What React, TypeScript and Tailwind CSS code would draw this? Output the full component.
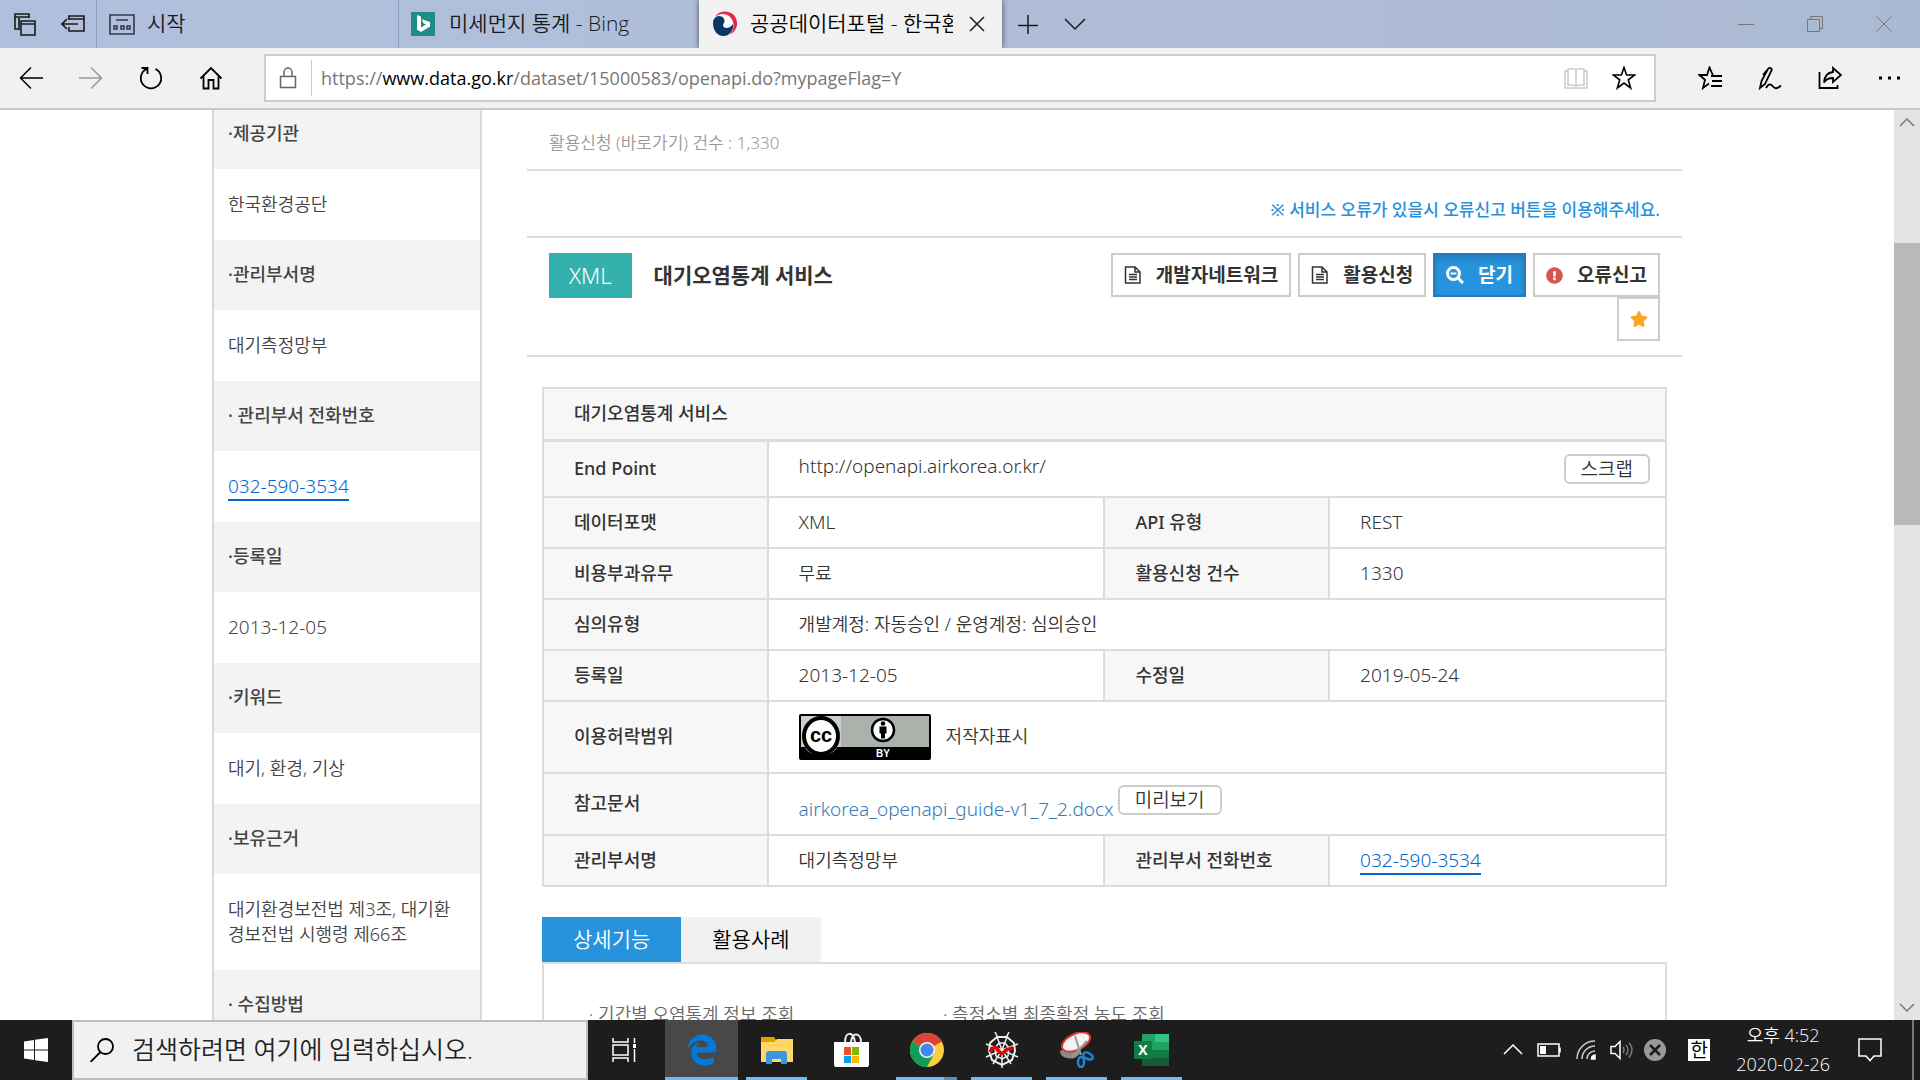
import type { ReactNode } from "react";
import { FaExclamationCircle, FaStar } from "react-icons/fa";
import { FaEdgeLegacy } from "react-icons/fa6";

type IconProps = {
  className?: string;
  children: ReactNode;
  size?: number;
  stroke?: number;
};

const Icon = ({ className = "", children, size = 24, stroke = 1.5 }: IconProps) => (
  <svg
    width={size}
    height={size}
    viewBox={`0 0 ${size} ${size}`}
    fill="none"
    stroke="currentColor"
    strokeWidth={stroke}
    className={`shrink-0 ${className}`}
    aria-hidden="true"
  >
    {children}
  </svg>
);

const sidebarItems = [
  { label: "·제공기관", value: "한국환경공단" },
  { label: "·관리부서명", value: "대기측정망부" },
  { label: "· 관리부서 전화번호", value: "032-590-3534", tel: true },
  { label: "·등록일", value: "2013-12-05", latin: true },
  { label: "·키워드", value: "대기, 환경, 기상" },
  { label: "·보유근거", value: "대기환경보전법 제3조, 대기환경보전법 시행령 제66조" },
  { label: "· 수집방법", value: "" },
];

function TabBar() {
  return (
    <header className="flex h-12 shrink-0 bg-linear-to-r from-[#afc0de] via-[#b0bdd8] to-[#abbad3] text-[21px] font-[350] text-[#1a1a1a]">
      <div className="flex w-[97px] items-center gap-6 border-r border-[#8f9fbd] pl-[13px]">
        <button aria-label="탭 미리 보기">
          <Icon stroke={1.6}>
            <path d="M6 17H2V2h14v4M2 5h14M6 18V6" />
            <path d="M8 9h14v14H8zM8 12h14" />
          </Icon>
        </button>
        <button aria-label="탭 보관">
          <Icon stroke={1.6}>
            <path d="M8 8V4h15v15H8v-4M8 7h15M1 12h16M6 7l-5 5 5 5" />
          </Icon>
        </button>
      </div>
      <button className="flex w-[302px] items-center gap-3 border-r border-[#8f9fbd] pl-3">
        <Icon size={26} stroke={2} className="text-[#333845]">
          <path d="M1 4h24v19H1zM7 9h12M5 15h3v3H5zM12 15h3v3h-3zM18 15h3v3h-3z" strokeWidth="1.6" />
        </Icon>
        시작
      </button>
      <button className="flex w-[300px] items-center gap-3.5 pl-3">
        <svg width="24" height="24" viewBox="0 0 24 24" aria-hidden="true">
          <rect width="24" height="24" fill="#1f8c88" />
          <path d="M6 3l4 1.5v11l5-3-2.600-1.200-1.600-4L19 10v4.500L10 20l-4-2.200z" fill="#fff" />
        </svg>
        미세먼지 통계 - Bing
      </button>
      <div className="flex w-[303px] items-center bg-[#f1f1f1] pl-[13px] shadow-[0_0_6px_rgba(0,0,0,0.6)]">
        <svg width="26" height="26" viewBox="0 0 26 26" className="shrink-0" aria-hidden="true">
          <circle cx="12.500" cy="13" r="11" fill="#fff" />
          <path d="M3 6C7-1 17-1 22 4c5 6 4 15-4 20 4-5 5-12 1-17C15 2 8 2 3 6z" fill="#e8284a" />
          <path d="M1 12c0-4 3-7 6-7 4 0 6 3 5.500 6-.5 1-1.500 2-1.500 3 0 4 7 4 10-1 1 6-3 12-9.500 12S1 19 1 12z" fill="#0b3766" />
        </svg>
        <span className="ml-3 w-[203px] overflow-hidden whitespace-nowrap text-black">공공데이터포털 - 한국환경공단</span>
        <button aria-label="탭 닫기" className="ml-4">
          <Icon size={16}>
            <path d="M1 1l14 14M15 1L1 15" />
          </Icon>
        </button>
      </div>
      <button aria-label="새 탭" className="ml-4">
        <Icon size={20}>
          <path d="M0 11.500h20M10 1v20" />
        </Icon>
      </button>
      <button aria-label="탭 목록" className="ml-[26px]">
        <Icon size={22}>
          <path d="M1 6l10 10L21 6" />
        </Icon>
      </button>
      <div className="ml-auto flex items-center gap-[53px] pr-7 text-[#777]">
        <button aria-label="최소화">
          <Icon size={16} stroke={1}>
            <path d="M0 8.500h16" />
          </Icon>
        </button>
        <button aria-label="이전 크기로">
          <Icon size={16} stroke={1}>
            <path d="M.5 3.500h12v12H.5zM3.500 3V.5h12v12H13" />
          </Icon>
        </button>
        <button aria-label="닫기">
          <Icon size={16} stroke={1}>
            <path d="M.5.5l15 15M15.500.5l-15 15" />
          </Icon>
        </button>
      </div>
    </header>
  );
}

function AddressBar() {
  return (
    <nav className="flex h-[62px] shrink-0 items-center border-b-2 border-[#c9c9c9] bg-[#f1f1f1] pl-[19px] text-black">
      <div className="flex w-[245px] items-center gap-9">
        <button aria-label="뒤로">
          <Icon>
            <path d="M12 1.500L1.500 12 12 22.500M1.500 12H24" />
          </Icon>
        </button>
        <button aria-label="앞으로" className="text-[#999]">
          <Icon>
            <path d="M12 1.500L22.500 12 12 22.500M22.500 12H0" />
          </Icon>
        </button>
        <button aria-label="새로 고침">
          <Icon stroke={1.8}>
            <path d="M7.500 3A10.200 10.200 0 1 0 16.500 3M8.500 8V2H2.500" />
          </Icon>
        </button>
        <button aria-label="홈">
          <Icon stroke={1.800}>
            <path d="M1.500 12.500L12 2l10.500 10.500M4.500 10v12.500h5V14h5v8.500h5V10" />
          </Icon>
        </button>
      </div>
      <div className="flex h-12 flex-1 items-center border-2 border-[#ccc] bg-white pr-[18px] pl-2.5">
        <Icon className="text-[#666]">
          <path d="M4.500 10.500h15v11h-15zM8 10V6a4 4 0 0 1 8 0v4" />
        </Icon>
        <a href="#" className="ml-[11px] flex-1 border-l border-[#ccc] pl-[9px] text-[18px] leading-9 text-[#767676]">
          https://<span className="text-black">www.data.go.kr</span>/dataset/15000583/openapi.do?mypageFlag=Y
        </a>
        <div className="flex gap-6">
          <button aria-label="읽기용 보기" className="text-[#ccc]">
            <Icon>
              <path d="M12 4c-2-2-5-1-8-1v16c3 0 6-.5 8 1 2-1.500 5-1 8-1V3c-3 0-6-1-8 1zM12 4v16M4 5H1v17h22V5h-3" />
            </Icon>
          </button>
          <button aria-label="즐겨찾기 추가">
            <Icon stroke={1.600}>
              <path d="M12 1.500l2.600 7.500h8l-6.300 4.800 2.300 8.200-6.600-5-6.600 5 2.300-8.200L1.400 9h8z" />
            </Icon>
          </button>
        </div>
      </div>
      <div className="ml-[42px] flex gap-9 pr-[18px]">
        <button aria-label="즐겨찾기">
          <Icon stroke={1.800}>
            <path d="M15 9.500L11.500 1.500 9 9H1.500l5.500 4.800L5 22l6-4.500M13 10h11M14 15h10M13 20h11" />
          </Icon>
        </button>
        <button aria-label="메모 추가">
          <Icon stroke={1.800}>
            <path d="M2 22l1.500-7L10 3c1-2 4.500-1 3.500 1.500L7 18l-5 4zM9 4L5 9M8 22c3-5 5-4 7-1.500s4 2.500 8-1" />
          </Icon>
        </button>
        <button aria-label="공유">
          <Icon stroke={1.800}>
            <path d="M1.500 6v16h18v-3M15 2l8 7-8 7v-4c-4 0-7 1-9 4.500C6.500 10 10 6.500 15 6z" />
          </Icon>
        </button>
        <button aria-label="설정 및 기타">
          <Icon>
            <path d="M1 12h3M10 12h3M19 12h3" strokeWidth="3" />
          </Icon>
        </button>
      </div>
    </nav>
  );
}

function Sidebar() {
  return (
    <aside className="w-[270px] shrink-0 border-x-2 border-[#d9d9d9] text-[18px] leading-[25px] text-[#444]">
      <dl className="-mt-[11px]">
        {sidebarItems.map((item) => (
          <div key={item.label}>
            <dt className="bg-[#f3f3f3] px-3.5 pt-[22px] pb-[23px] font-medium">{item.label}</dt>
            <dd className={`px-3.5 py-[23px] font-[350] break-all ${item.latin || item.tel ? "text-[19px]" : ""}`}>
              {item.tel ? (
                <a href="tel:032-590-3534" className="border-b-2 border-[#0066d0] text-[#0066d0]">
                  {item.value}
                </a>
              ) : (
                item.value
              )}
            </dd>
          </div>
        ))}
      </dl>
    </aside>
  );
}

const DocIcon = () => (
  <Icon size={18} stroke={1.500}>
    <path d="M1.500 1h9.500l5 5v11h-14.500zM11 1v5h5M5 8.500h8M5 11h8M5 13.500h8" />
  </Icon>
);

type ActionProps = { icon: ReactNode; label: string; active?: boolean };

const Action = ({ icon, label, active }: ActionProps) => (
  <button
    className={`flex h-11 items-center gap-3.5 border-2 px-[11px] text-[19px] font-bold ${
      active
        ? "border-[#2b78b8] bg-[#2793dd] text-white shadow-[inset_0_4px_6px_rgba(0,0,0,0.15)]"
        : "border-[#ccc] bg-white text-[#333]"
    }`}
  >
    {icon}
    {label}
  </button>
);

type CellProps = { children: ReactNode; span?: number; latin?: boolean };

const Th = ({ children }: CellProps) => (
  <th scope="row" className="border-2 border-[#ddd] bg-[#f7f7f7] px-[30px] py-3 text-left font-medium">
    {children}
  </th>
);

const Td = ({ children, span, latin }: CellProps) => (
  <td colSpan={span} className={`border-2 border-[#ddd] px-[30px] font-[350] ${latin ? "text-[19px]" : ""}`}>
    {children}
  </td>
);

const SmallButton = ({ children }: { children: ReactNode }) => (
  <button className="h-[30px] rounded-md border-2 border-[#ccc] bg-white px-[15px] text-[19px] leading-6 font-[350] text-[#333]">
    {children}
  </button>
);

const CcBadge = () => (
  <svg width="132" height="46" viewBox="0 0 132 46" role="img" aria-label="CC BY">
    <rect width="132" height="46" rx="2" fill="#000" />
    <rect x="2" y="2" width="128" height="31" fill="#aab2ab" />
    <path d="M2 2h40v31H38C34 44 10 44 6 33H2z" fill="#c9cfc9" />
    <ellipse cx="22" cy="22" rx="17" ry="18" fill="#fff" stroke="#000" strokeWidth="4" />
    <text x="22" y="28" textAnchor="middle" fontSize="20" fontWeight="900" fontFamily="Liberation Sans, sans-serif" fill="#000">
      cc
    </text>
    <circle cx="84" cy="16" r="11" fill="#fff" stroke="#000" strokeWidth="2.500" />
    <circle cx="84" cy="9.500" r="2.300" fill="#000" />
    <path d="M80.500 12.500h7v7h-1.500v5h-4v-5h-1.500z" fill="#000" />
    <text x="84" y="43" textAnchor="middle" fontSize="10" fontWeight="700" fontFamily="Liberation Sans, sans-serif" fill="#fff">
      BY
    </text>
  </svg>
);

function InfoTable() {
  return (
    <table className="w-full table-fixed border-collapse text-[18px] leading-[25px] text-[#333]">
      <colgroup>
        <col className="w-[20%]" />
        <col className="w-[30%]" />
        <col className="w-[20%]" />
        <col className="w-[30%]" />
      </colgroup>
      <thead>
        <tr className="h-[52px]">
          <th colSpan={4} className="border-2 border-b-3 border-[#ddd] bg-[#f7f7f7] px-[30px] text-left font-medium">
            대기오염통계 서비스
          </th>
        </tr>
      </thead>
      <tbody>
        <tr>
          <Th>End Point</Th>
          <td colSpan={3} className="border-2 border-[#ddd] py-3 pr-[15px] pl-[30px] text-[19px] font-[350]">
            <div className="flex justify-between">
              http://openapi.airkorea.or.kr/
              <SmallButton>스크랩</SmallButton>
            </div>
          </td>
        </tr>
        <tr>
          <Th>데이터포맷</Th>
          <Td latin>XML</Td>
          <Th>API 유형</Th>
          <Td latin>REST</Td>
        </tr>
        <tr>
          <Th>비용부과유무</Th>
          <Td>무료</Td>
          <Th>활용신청 건수</Th>
          <Td latin>1330</Td>
        </tr>
        <tr>
          <Th>심의유형</Th>
          <Td span={3}>개발계정: 자동승인 / 운영계정: 심의승인</Td>
        </tr>
        <tr>
          <Th>등록일</Th>
          <Td latin>2013-12-05</Td>
          <Th>수정일</Th>
          <Td latin>2019-05-24</Td>
        </tr>
        <tr className="h-[72px]">
          <Th>이용허락범위</Th>
          <Td span={3}>
            <div className="flex items-center gap-[15px]">
              <CcBadge />
              저작자표시
            </div>
          </Td>
        </tr>
        <tr className="h-[62px]">
          <Th>참고문서</Th>
          <Td span={3} latin>
            <div className="flex gap-1">
              <a href="#" className="pt-3 text-[#337ab7]">
                airkorea_openapi_guide-v1_7_2.docx
              </a>
              <SmallButton>미리보기</SmallButton>
            </div>
          </Td>
        </tr>
        <tr>
          <Th>관리부서명</Th>
          <Td>대기측정망부</Td>
          <Th>관리부서 전화번호</Th>
          <Td latin>
            <a href="tel:032-590-3534" className="border-b-2 border-[#0066d0] text-[#0066d0]">
              032-590-3534
            </a>
          </Td>
        </tr>
      </tbody>
    </table>
  );
}

function Detail() {
  return (
    <main className="min-w-0 flex-1 text-[#333]">
      <p className="border-b-2 border-[#ddd] pt-5 pb-[13px] pl-[22px] text-[17px] leading-[26px] font-[350] text-[#999]">
        활용신청 (바로가기) 건수 : 1,330
      </p>
      <p className="border-b-2 border-[#ddd] pt-[26px] pr-[22px] pb-[13px] text-right text-[17px] leading-[26px] font-medium text-[#2791dc]">
        ※ 서비스 오류가 있을시 오류신고 버튼을 이용해주세요.
      </p>
      <section className="flex items-start border-b-2 border-[#ddd] px-[22px] pt-[15px] pb-3.5">
        <span className="bg-[#34b1ad] px-5 text-[22px] leading-[45px] font-light text-white">XML</span>
        <h2 className="ml-[22px] text-[21px] leading-[44px] font-bold">대기오염통계 서비스</h2>
        <div className="ml-auto flex flex-col items-end">
          <div className="flex gap-[7px]">
            <Action icon={<DocIcon />} label="개발자네트워크" />
            <Action icon={<DocIcon />} label="활용신청" />
            <Action
              active
              label="닫기"
              icon={
                <Icon size={18} stroke={3}>
                  <circle cx="7.500" cy="7.500" r="6" />
                  <path d="M12 12l5 5" />
                  <path d="M4.500 7.500h6" strokeWidth="2" />
                </Icon>
              }
            />
            <Action icon={<FaExclamationCircle className="size-[17px] text-[#d9534f]" />} label="오류신고" />
          </div>
          <button aria-label="즐겨찾기" className="flex h-11 w-[43px] items-center justify-center border-2 border-[#ccc]">
            <FaStar className="size-[18px] text-[#f9a526]" />
          </button>
        </div>
      </section>
      <div className="px-[15px] pt-[30px]">
        <InfoTable />
        <div className="mt-[30px] flex text-[21px] leading-[45px] font-[350]">
          <button className="bg-[#2793dd] px-[31px] text-white">상세기능</button>
          <button className="bg-[#f1f1f1] px-[31px] text-black">활용사례</button>
        </div>
        <ul className="flex border-2 border-[#ddd] px-[45px] pt-[37px] pb-10 text-[18px] leading-[26px] font-[350] text-[#666]">
          <li className="w-[354px]">· 기간별 오염통계 정보 조회</li>
          <li>· 측정소별 최종확정 농도 조회</li>
        </ul>
      </div>
    </main>
  );
}

function Scrollbar() {
  return (
    <div className="flex w-[26px] shrink-0 flex-col items-center justify-between bg-[#e4e4e4] text-[#777]">
      <Icon size={16} className="mt-1">
        <path d="M1 12l7-7 7 7" />
      </Icon>
      <div className="mt-[113px] mb-auto h-[282px] w-full bg-[#b9b9b9]" />
      <Icon size={16} className="mb-1">
        <path d="M1 4l7 7 7-7" />
      </Icon>
    </div>
  );
}

const apps = [
  {
    name: "Microsoft Edge",
    cell: "bg-[#484848]",
    bar: "w-full bg-[#76b9ed]",
    icon: <FaEdgeLegacy className="size-8 text-[#0478d7]" />,
  },
  {
    name: "파일 탐색기",
    cell: "",
    bar: "w-[61px] bg-[#76b9ed]",
    icon: (
      <svg width="32" height="32" viewBox="0 0 32 32">
        <path d="M0 3h13l2 3v4H0z" fill="#e0a000" />
        <path d="M0 8h13l3-3h16v23H0z" fill="#ffd766" />
        <path d="M5 30V20q0-3 3-3h15q3 0 3 3v10h-6v-5h-9v5z" fill="#3a96dd" />
      </svg>
    ),
  },
  {
    name: "Microsoft Store",
    cell: "",
    bar: "w-0",
    icon: (
      <svg width="36" height="36" viewBox="0 0 36 36">
        <path d="M11 11C11-1 19-1 21 10M17 10C18-1 27 1 27 10" fill="none" stroke="#eee" strokeWidth="2" />
        <path d="M0 10h35v23l-1 2H1l-1-2z" fill="#fff" />
        <path d="M10 15h7v8h-7z" fill="#f25022" />
        <path d="M18 15h7v8h-7z" fill="#7fba00" />
        <path d="M10 24h7v7h-7z" fill="#00a4ef" />
        <path d="M18 24h7v7h-7z" fill="#ffb900" />
      </svg>
    ),
  },
  {
    name: "Chrome",
    cell: "",
    bar: "w-[61px] bg-linear-to-r from-[#76b9ed] from-78% to-[#5b8fb8] to-78%",
    icon: (
      <svg width="34" height="34" viewBox="0 0 34 34">
        <circle cx="17" cy="17" r="17" fill="#ffcd40" />
        <path d="M17 17L2.300 8.500A17 17 0 0 1 31.700 8.500z" fill="#db4437" />
        <path d="M31.700 8.500H17v8z" fill="#db4437" />
        <path d="M2.300 8.500A17 17 0 0 0 17 34l7-13-7-4z" fill="#0f9d58" />
        <circle cx="17" cy="17" r="8" fill="#f1f1f1" />
        <circle cx="17" cy="17" r="6.500" fill="#4285f4" />
      </svg>
    ),
  },
  {
    name: "Spyder",
    cell: "",
    bar: "w-[61px] bg-[#76b9ed]",
    icon: (
      <svg width="34" height="36" viewBox="0 0 34 36" fill="none" stroke="#eee" strokeWidth="1.500">
        <path d="M10 0l3 6M24 0l-3 6M17 18L12 5M17 18l5-13M17 18L1 12M17 18l16-6M17 18L1 25M17 18l16 7M17 18v18M17 18L8 32M17 18l9 14" />
        <path d="M12 5h10l7 6 1 8-3 9-10 5-10-5-3-9 1-8z" strokeWidth="2" />
        <path d="M14 11h6l4 5-1 8-6 3-6-3-1-8z" />
        <path d="M5 20c3-6 6-5 8-2s4 5 7 1 5 0 8-4" stroke="#e80000" strokeWidth="3.500" />
      </svg>
    ),
  },
  {
    name: "캡처 도구",
    cell: "",
    bar: "w-[61px] bg-[#76b9ed]",
    icon: (
      <svg width="36" height="36" viewBox="0 0 36 36" fill="none">
        <path d="M1 19c0 5 6 9 15 7l6-5-13-5z" fill="#8b8b8b" />
        <ellipse cx="17" cy="10" rx="15" ry="8" transform="rotate(-25 17 10)" fill="#f5f5f5" stroke="#e03a3a" strokeWidth="2" />
        <path d="M16 4l6 19M28 9L13 25" stroke="#999" strokeWidth="2" />
        <ellipse cx="29" cy="24" rx="5" ry="3" transform="rotate(25 29 24)" stroke="#1c86cf" strokeWidth="2.500" />
        <ellipse cx="22" cy="30" rx="3" ry="5" stroke="#1c86cf" strokeWidth="2.500" />
      </svg>
    ),
  },
  {
    name: "Excel",
    cell: "",
    bar: "w-[61px] bg-[#76b9ed]",
    icon: (
      <svg width="35" height="32" viewBox="0 0 35 32">
        <path d="M8 0h27v32H8z" fill="#21a366" />
        <path d="M21 0h14v8H21z" fill="#33c481" />
        <path d="M8 16h13v8H8zM21 16h14v8H21z" fill="#107c41" />
        <path d="M8 24h27v8H8z" fill="#185c37" />
        <rect y="7" width="18" height="18" rx="1" fill="#107c41" />
        <text x="9" y="21" textAnchor="middle" fontSize="14" fontWeight="700" fontFamily="Open Sans, sans-serif" fill="#fff">
          X
        </text>
      </svg>
    ),
  },
];

function Taskbar() {
  return (
    <footer className="flex h-15 shrink-0 bg-[#1d1d1d] text-white">
      <button aria-label="시작" className="flex w-[72px] items-center justify-center">
        <svg width="24" height="24" viewBox="0 0 24 24" fill="#fff" aria-hidden="true">
          <path d="M0 3.500L10 2v9.500H0zM11 1.800L24 0v11.500H11zM0 12.500h10V22L0 20.500zM11 12.500h13V24l-13-1.800z" />
        </svg>
      </button>
      <label className="flex w-[516px] items-center gap-[18px] border-2 border-[#bdbdbd] bg-[#f1f1f1] pl-4 text-black">
        <Icon stroke={1.800}>
          <circle cx="15.500" cy="8.500" r="7.500" />
          <path d="M10.500 14L.5 24" />
        </Icon>
        <input
          type="text"
          aria-label="검색"
          placeholder="검색하려면 여기에 입력하십시오."
          className="w-full bg-transparent text-[25px] font-[350] outline-none placeholder:text-[#222]"
        />
      </label>
      <button aria-label="작업 보기" className="flex w-[77px] items-center pl-6">
        <Icon>
          <path d="M1 0v4h15V0M1 24v-4h15v4M1 7h15v10H1zM22.500 0v5M22.500 11v13" />
          <path d="M21 6h3v4h-3z" fill="currentColor" stroke="none" />
        </Icon>
      </button>
      <div className="flex gap-0.5">
        {apps.map((app) => (
          <button key={app.name} aria-label={app.name} className={`flex w-[73px] flex-col items-center ${app.cell}`}>
            <span className="flex flex-1 items-center pt-[3px]">{app.icon}</span>
            <span className={`h-[3px] ${app.bar}`} />
          </button>
        ))}
      </div>
      <div className="ml-auto flex items-center">
        <Icon size={20}>
          <path d="M1 14l9-9 9 9" />
        </Icon>
        <Icon className="ml-3.5">
          <path d="M1 6h21v12H1zM23 9.500v5" />
          <path d="M3 8h6v8H3z" fill="currentColor" stroke="none" />
        </Icon>
        <Icon size={20} className="ml-[15px]">
          <path d="M1 19A18 18 0 0 1 19 1M6 19A13 13 0 0 1 19 6M11 19a8 8 0 0 1 8-8" stroke="#ccc" />
          <path d="M15.500 19a4 4 0 0 1 3.500-4v4z" fill="currentColor" />
        </Icon>
        <Icon className="ml-3.5">
          <path d="M1 8.500h4l5-5v17l-5-5H1z" />
          <path d="M13 9q2 3 0 6M16 7q4 5 0 10M19 4.500q6 7 0 15" stroke="#777" />
        </Icon>
        <svg width="22" height="22" viewBox="0 0 22 22" className="ml-2.5" aria-hidden="true">
          <circle cx="11" cy="11" r="11" fill="#999" />
          <path d="M6 6l10 10M16 6L6 16" stroke="#1d1d1d" strokeWidth="2.500" />
        </svg>
        <button className="ml-[22px] size-[22px] bg-white text-[19px] leading-[22px] text-black">한</button>
        <time className="ml-[26px] text-center text-[18px] leading-[29px] font-[350]">
          오후 4:52
          <br />
          2020-02-26
        </time>
        <button aria-label="알림 센터" className="ml-7">
          <Icon>
            <path d="M1 1h22v17h-7l-4 4.500L8 18H1z" />
          </Icon>
        </button>
        <span className="mr-1.5 ml-[30px] h-full border-l-2 border-[#777]" />
      </div>
    </footer>
  );
}

export default function App() {
  return (
    <div className="flex h-screen flex-col overflow-hidden bg-white font-['Open_Sans','Noto_Sans_CJK_KR',sans-serif]">
      <TabBar />
      <AddressBar />
      <div className="flex min-h-0 flex-1">
        <div className="min-w-0 flex-1 overflow-hidden font-['Noto_Sans','Noto_Sans_CJK_KR',sans-serif]">
          <div className="mx-auto flex max-w-[1470px] gap-[45px]">
            <Sidebar />
            <Detail />
          </div>
        </div>
        <Scrollbar />
      </div>
      <Taskbar />
    </div>
  );
}
